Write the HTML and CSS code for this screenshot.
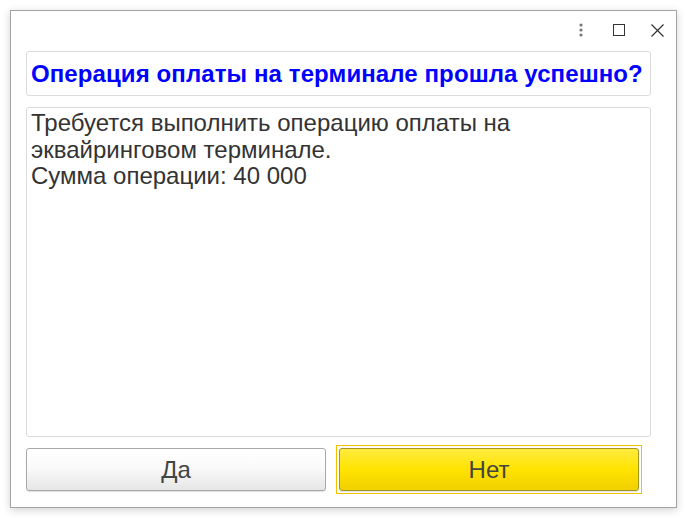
FILE: index.html
```html
<!DOCTYPE html>
<html lang="ru">
<head>
<meta charset="utf-8">
<title>Вопрос</title>
<link rel="stylesheet" href="styles.css">
</head>
<body>
<div class="window">
  <div class="titlebar">
    <button class="tb-btn" aria-label="Ещё">
      <svg width="4" height="14" viewBox="0 0 4 14"><circle cx="2" cy="2" r="1.6" fill="#777"/><circle cx="2" cy="7" r="1.6" fill="#777"/><circle cx="2" cy="12" r="1.6" fill="#777"/></svg>
    </button>
    <button class="tb-btn" aria-label="Развернуть">
      <svg width="12" height="12" viewBox="0 0 12 12"><rect x="0.5" y="0.5" width="11" height="11" fill="none" stroke="#333" stroke-width="1"/></svg>
    </button>
    <button class="tb-btn" aria-label="Закрыть">
      <svg width="13" height="13" viewBox="0 0 13 13"><path d="M0.5 0.5 L12.5 12.5 M12.5 0.5 L0.5 12.5" stroke="#333" stroke-width="1.2"/></svg>
    </button>
  </div>
  <div class="content">
    <div class="question">Операция оплаты на терминале прошла успешно?</div>
    <div class="message">Требуется выполнить операцию оплаты на<br>эквайринговом терминале.<br>Сумма операции: 40 000</div>
    <div class="buttons">
      <div class="btn-slot"><button class="btn">Да</button></div>
      <div class="btn-slot focused"><button class="btn btn-default">Нет</button></div>
    </div>
  </div>
</div>
</body>
</html>
```
FILE: styles.css
```css
html, body {
  margin: 0;
  padding: 0;
  background: #fff;
}
body {
  padding: 10px 9px 10px 10px;
  font-family: "Liberation Sans", Arial, sans-serif;
}
.window {
  width: 665px;
  height: 496px;
  border: 1px solid #a3a3a3;
  box-shadow: 0 2px 8px rgba(0,0,0,0.18);
  background: #fff;
  display: flex;
  flex-direction: column;
}
.titlebar {
  height: 40px;
  display: flex;
  justify-content: flex-end;
  align-items: center;
  padding-right: 0;
  padding-bottom: 2px;
  box-sizing: border-box;
}
.tb-btn {
  border: 0;
  background: none;
  padding: 0;
  margin: 0;
  width: 38px;
  height: 20px;
  display: flex;
  align-items: center;
  justify-content: center;
}
.content {
  flex: 1;
  display: flex;
  flex-direction: column;
  padding: 0 25px 0 15px;
}
.question {
  height: 43px;
  border: 1px solid #dcdcdc;
  border-radius: 3px;
  display: flex;
  align-items: center;
  padding-left: 4px;
  font-weight: bold;
  font-size: 24px;
  letter-spacing: 0.1px;
  color: #0000ff;
  white-space: nowrap;
}
.message {
  margin-top: 11px;
  height: 322px;
  border: 1px solid #dcdcdc;
  border-radius: 3px;
  padding: 2px 4px 4px;
  font-size: 24px;
  line-height: 26.5px;
  color: #333;
}
.buttons {
  margin-top: 8px;
  display: grid;
  grid-template-columns: 300px 306px;
  column-gap: 10px;
}
.btn-slot {
  padding: 3px 0;
}
.btn-slot.focused {
  border: 1px solid #f5c000;
  padding: 2px 2px;
}
.btn {
  width: 100%;
  height: 43px;
  border: 1px solid #a9a9a9;
  border-radius: 3px;
  background: linear-gradient(#ffffff 0%, #fafafa 45%, #e6e6e6 100%);
  box-shadow: 0 1px 1px rgba(0,0,0,0.12);
  font-family: "Liberation Sans", Arial, sans-serif;
  font-size: 24px;
  color: #444;
  padding: 0;
  display: block;
}
.btn-default {
  border-color: #a69425;
  background: linear-gradient(#ffeb3f 0%, #ffe300 50%, #f0d000 100%);
}
```
